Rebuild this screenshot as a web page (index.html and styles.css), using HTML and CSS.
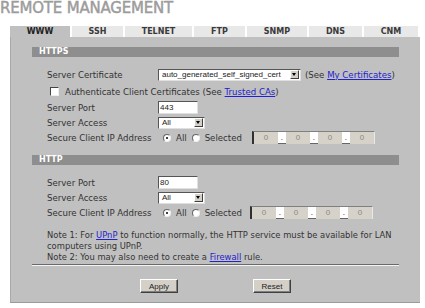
FILE: index.html
```html
<!DOCTYPE html>
<html lang="en">
<head>
    <meta charset="UTF-8">
    <title>Remote Management</title>
    <link rel="stylesheet" href="styles.css">
</head>
<body>
    <h1 class="title">REMOTE MANAGEMENT</h1>
    <div class="tabs">
        <div class="tab active">WWW</div>
        <div class="tab">SSH</div>
        <div class="tab">TELNET</div>
        <div class="tab">FTP</div>
        <div class="tab">SNMP</div>
        <div class="tab">DNS</div>
        <div class="tab">CNM</div>
    </div>
    <div class="panel">
        <div class="bar">HTTPS</div>
        <div class="fields">
            <div class="row">
                <span class="label">Server Certificate</span>
                <span class="select cert"><span class="select-text">auto_generated_self_signed_cert</span><span class="arrow"></span></span>
                <span class="after">(See <a href="#">My Certificates</a>)</span>
            </div>
            <div class="row check-row">
                <span class="checkbox"></span>
                <span>Authenticate Client Certificates (See <a href="#">Trusted CAs</a>)</span>
            </div>
            <div class="row">
                <span class="label">Server Port</span>
                <span class="input">443</span>
            </div>
            <div class="row">
                <span class="label">Server Access</span>
                <span class="select small"><span class="select-text">All</span><span class="arrow"></span></span>
            </div>
            <div class="row">
                <span class="label">Secure Client IP Address</span>
                <span class="radio on"></span><span class="radio-label">All</span>
                <span class="radio"></span><span class="radio-label">Selected</span>
                <span class="ip"><span class="oct">0</span><span class="dot">.</span><span class="oct">0</span><span class="dot">.</span><span class="oct">0</span><span class="dot">.</span><span class="oct">0</span></span>
            </div>
        </div>
        <div class="bar">HTTP</div>
        <div class="fields">
            <div class="row">
                <span class="label">Server Port</span>
                <span class="input">80</span>
            </div>
            <div class="row">
                <span class="label">Server Access</span>
                <span class="select small"><span class="select-text">All</span><span class="arrow"></span></span>
            </div>
            <div class="row">
                <span class="label">Secure Client IP Address</span>
                <span class="radio on"></span><span class="radio-label">All</span>
                <span class="radio"></span><span class="radio-label">Selected</span>
                <span class="ip ip-http"><span class="oct">0</span><span class="dot">.</span><span class="oct">0</span><span class="dot">.</span><span class="oct">0</span><span class="dot">.</span><span class="oct">0</span></span>
            </div>
        </div>
        <div class="notes">
            Note 1: For <a href="#">UPnP</a> to function normally, the HTTP service must be available for LAN<br>
            computers using UPnP.<br>
            Note 2: You may also need to create a <a href="#">Firewall</a> rule.
        </div>
        <div class="rule"></div>
        <div class="buttons">
            <button class="btn">Apply</button>
            <button class="btn">Reset</button>
        </div>
    </div>
</body>
</html>
```

FILE: styles.css
```css
body {
    margin: 0;
    font-family: "DejaVu Sans", Verdana, sans-serif;
    font-size: 8.6px;
    color: #333;
    background: #fff;
}

.title {
    margin: 0;
    height: 26px;
    font-size: 15px;
    line-height: 16px;
    font-weight: normal;
    color: #9c9c9c;
    -webkit-text-stroke: 0.45px #9c9c9c;
    letter-spacing: -0.2px;
}

.tabs {
    display: grid;
    grid-template-columns: 60px 51px 67px 51px 60px 53px 54px;
    gap: 2px;
    margin-left: 10px;
    height: 11px;
}

.tab {
    background: #e8e8e8;
    text-align: center;
    line-height: 11px;
    font-size: 8px;
    font-weight: bold;
    color: #3a3a3a;
}

.tab.active {
    background: #c0c0c0;
    color: #222;
}

.panel {
    margin-left: 10px;
    width: 410px;
    background: #c0c0c0;
    padding: 10px 21px 9px 21px;
    box-sizing: border-box;
    border-left: 1px solid #a9a9a9;
    border-bottom: 1px solid #9a9a9a;
}

.bar {
    background: #8e8e8e;
    color: #fff;
    font-weight: bold;
    height: 10px;
    line-height: 10px;
    padding-left: 7px;
    font-size: 8px;
}

.fields {
    padding: 10px 0 10px 15px;
}

.row {
    display: flex;
    align-items: center;
    height: 15px;
    white-space: nowrap;
}

.check-row {
    height: 18px;
    padding-top: 1px;
    box-sizing: border-box;
}

.label {
    width: 111px;
    flex-shrink: 0;
}

a {
    color: #2222cc;
}

.select {
    display: inline-flex;
    align-items: center;
    height: 12px;
    box-sizing: border-box;
    background: #fff;
    border-top: 1px solid #555;
    border-left: 1px solid #555;
    border-right: 1px solid #e0e0e0;
    border-bottom: 1px solid #e0e0e0;
    font-family: "Liberation Sans", Arial, sans-serif;
    font-size: 8px;
    color: #222;
}

.select-text {
    flex: 1;
    padding-left: 3px;
}

.cert {
    width: 143px;
}

.small {
    width: 47px;
}

.arrow {
    width: 9px;
    height: 9px;
    margin-right: 1px;
    background: #d4d0c8;
    border-top: 1px solid #fff;
    border-left: 1px solid #fff;
    border-right: 1px solid #404040;
    border-bottom: 1px solid #404040;
    box-sizing: border-box;
    position: relative;
}

.arrow::after {
    content: "";
    position: absolute;
    left: 1px;
    top: 2px;
    border-left: 2.5px solid transparent;
    border-right: 2.5px solid transparent;
    border-top: 3px solid #000;
}

.after {
    margin-left: 4px;
}

.checkbox {
    width: 9px;
    height: 9px;
    box-sizing: border-box;
    background: #fff;
    border-top: 1px solid #444;
    border-left: 1px solid #444;
    border-right: 1px solid #eee;
    border-bottom: 1px solid #eee;
    margin: 0 6px 0 3px;
}

.input {
    width: 40px;
    height: 13px;
    box-sizing: border-box;
    background: #fff;
    border-top: 1px solid #555;
    border-left: 1px solid #555;
    border-right: 1px solid #e0e0e0;
    border-bottom: 1px solid #e0e0e0;
    font-family: "Liberation Sans", Arial, sans-serif;
    font-size: 8px;
    line-height: 11px;
    padding-left: 1px;
    color: #222;
}

.radio {
    width: 8px;
    height: 8px;
    border-radius: 50%;
    box-sizing: border-box;
    background: #fff;
    border: 1px solid #666;
    border-right-color: #eee;
    border-bottom-color: #eee;
    margin-left: 5px;
    position: relative;
}

.radio.on::after {
    content: "";
    position: absolute;
    left: 2px;
    top: 2px;
    width: 2px;
    height: 2px;
    border-radius: 50%;
    background: #000;
}

.radio-label {
    margin-left: 5px;
}

.ip {
    display: inline-flex;
    margin-left: 10px;
    height: 13px;
    box-sizing: border-box;
    border-left: 2px solid #303030;
    border-top: 1px solid #808080;
    border-right: 1px solid #e8e8e8;
    background: #d6d2ca;
    font-family: "Liberation Sans", Arial, sans-serif;
    font-size: 8px;
    line-height: 12px;
}

.oct {
    width: 24px;
    text-align: center;
    color: #888;
}

.dot {
    width: 8px;
    text-align: center;
    background: #fff;
    color: #000;
    border-bottom: 1px solid #666;
    box-sizing: border-box;
}

.ip-http {
    margin-left: 8px;
}

.notes {
    padding: 0 0 0 15px;
    font-size: 8.4px;
    line-height: 11px;
    white-space: nowrap;
}

.rule {
    margin-top: 1px;
    height: 0;
    border-top: 1px solid #6a6a6a;
    border-bottom: 1px solid #f4f4f4;
}

.buttons {
    display: flex;
    margin-top: 13px;
    padding-left: 108px;
    gap: 75px;
}

.btn {
    width: 38px;
    height: 14px;
    padding: 0;
    background: #d4d0c8;
    border: 1px solid #404040;
    border-top-color: #fff;
    border-left-color: #fff;
    box-shadow: inset -1px -1px 0 #808080;
    font-family: "Liberation Sans", Arial, sans-serif;
    font-size: 8px;
    color: #222;
}
```
